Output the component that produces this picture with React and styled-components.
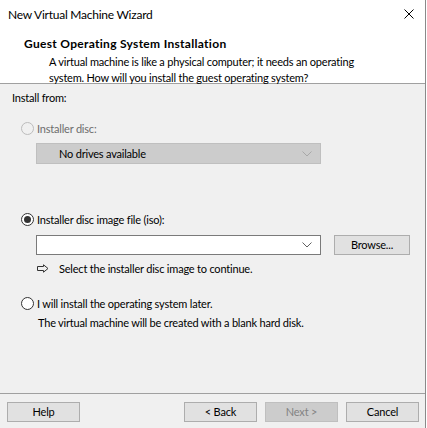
import React from "react";
import styled, { createGlobalStyle } from "styled-components";

const GlobalStyle = createGlobalStyle`
  html, body {
    margin: 0;
    padding: 0;
    background: #ffffff;
  }
  body {
    font-family: "Segoe UI", Lato, "Liberation Sans", sans-serif;
    font-size: 11px;
    letter-spacing: -0.2px;
    color: #000000;
  }
`;

function App() {
  return (
    <>
      <GlobalStyle />
      <Window>
        <TitleBar>
          <Title>New Virtual Machine Wizard</Title>
          <CloseButton>
            <svg width="10" height="10" viewBox="0 0 10 10">
              <path d="M0.5 0.5 L9.5 9.5 M9.5 0.5 L0.5 9.5" stroke="#000" strokeWidth="1" />
            </svg>
          </CloseButton>
        </TitleBar>
        <Header>
          <HeaderTitle>Guest Operating System Installation</HeaderTitle>
          <HeaderText>
            A virtual machine is like a physical computer; it needs an operating
            <br />
            system. How will you install the guest operating system?
          </HeaderText>
        </Header>
        <Body>
          <SectionLabel>Install from:</SectionLabel>

          <RadioRow top={14} disabled>
            <Radio disabled />
            Installer disc:
          </RadioRow>
          <Combo top={7} height={21} disabled>
            <ComboText>No drives available</ComboText>
            <Chevron color="#a8a8a8" />
          </Combo>

          <RadioRow top={47}>
            <Radio checked />
            Installer disc image file (iso):
          </RadioRow>
          <ComboLine>
            <Combo top={0} height={20}>
              <ComboText />
              <Chevron color="#606060" />
            </Combo>
            <Button width={76}>Browse...</Button>
          </ComboLine>
          <HintRow>
            <svg width="12" height="9" viewBox="0 0 12 9">
              <path
                d="M0.5 2.5 H6.5 V0.8 L11 4.5 L6.5 8.2 V6.5 H0.5 Z"
                fill="none"
                stroke="#333"
                strokeWidth="1"
              />
            </svg>
            <span>Select the installer disc image to continue.</span>
          </HintRow>

          <RadioRow top={19}>
            <Radio />
            I will install the operating system later.
          </RadioRow>
          <Note>The virtual machine will be created with a blank hard disk.</Note>
        </Body>
        <Footer>
          <Button width={73}>Help</Button>
          <Spacer />
          <Button width={73}>&lt; Back</Button>
          <Button width={73} disabled>
            Next &gt;
          </Button>
          <Button width={73}>Cancel</Button>
        </Footer>
      </Window>
    </>
  );
}

function Chevron({ color }) {
  return (
    <svg width="10" height="6" viewBox="0 0 10 6">
      <path d="M0.5 0.5 L5 5 L9.5 0.5" fill="none" stroke={color} strokeWidth="1" />
    </svg>
  );
}

export default App;

const Window = styled.div`
  width: 425px;
  height: 428px;
  border-right: 1px solid #8a8a8a;
  display: flex;
  flex-direction: column;
  background: #f0f0f0;
  overflow: hidden;
`;

const TitleBar = styled.div`
  height: 30px;
  background: #ffffff;
  display: flex;
  align-items: center;
  padding-left: 8px;
  box-sizing: border-box;
`;

const Title = styled.div`
  flex: 1;
  font-size: 12px;
  letter-spacing: -0.25px;
  line-height: 16px;
  margin-top: -1px;
`;

const CloseButton = styled.div`
  width: 10px;
  height: 10px;
  margin-right: 11px;
  margin-top: -2px;
  display: flex;
`;

const Header = styled.div`
  height: 53px;
  flex-shrink: 0;
  background: #ffffff;
  border-bottom: 1px solid #a0a0a0;
  padding-left: 24px;
`;

const HeaderTitle = styled.div`
  font-weight: bold;
  font-size: 12px;
  letter-spacing: 0.3px;
  line-height: 14px;
  margin-top: 7px;
`;

const HeaderText = styled.div`
  line-height: 16px;
  margin-top: 3px;
  padding-left: 25px;
`;

const Body = styled.div`
  flex: 1;
  display: flex;
  flex-direction: column;
  padding-left: 12px;
  border-bottom: 1px solid #a0a0a0;
`;

const SectionLabel = styled.div`
  line-height: 16px;
  margin-top: 6px;
`;

const RadioRow = styled.div`
  display: flex;
  align-items: center;
  height: 16px;
  margin-top: ${(p) => p.top}px;
  margin-left: 9px;
  gap: 3px;
  color: ${(p) => (p.disabled ? "#6d6d6d" : "#000000")};
`;

const Radio = styled.span`
  width: 13px;
  height: 13px;
  box-sizing: border-box;
  border-radius: 50%;
  border: 1px solid ${(p) => (p.disabled ? "#bcbcbc" : "#333333")};
  background: ${(p) => (p.disabled ? "#f0f0f0" : "#ffffff")};
  display: flex;
  align-items: center;
  justify-content: center;
  flex-shrink: 0;

  &::after {
    content: "";
    display: ${(p) => (p.checked ? "block" : "none")};
    width: 7px;
    height: 7px;
    border-radius: 50%;
    background: #333333;
  }
`;

const Combo = styled.div`
  width: 285px;
  height: ${(p) => p.height}px;
  box-sizing: border-box;
  margin-top: ${(p) => p.top}px;
  margin-left: ${(p) => (p.top ? 24 : 0)}px;
  display: flex;
  align-items: center;
  padding: 0 8px 0 22px;
  background: ${(p) => (p.disabled ? "#cccccc" : "#ffffff")};
  border: 1px solid ${(p) => (p.disabled ? "#bfbfbf" : "#7a7a7a")};
`;

const ComboText = styled.span`
  flex: 1;
  line-height: 16px;
  color: #000000;
`;

const ComboLine = styled.div`
  display: flex;
  align-items: center;
  margin-top: 8px;
  margin-left: 24px;
  gap: 13px;
`;

const Button = styled.div`
  width: ${(p) => p.width}px;
  height: 20px;
  box-sizing: border-box;
  display: flex;
  align-items: center;
  justify-content: center;
  background: ${(p) => (p.disabled ? "#cccccc" : "#e1e1e1")};
  border: 1px solid ${(p) => (p.disabled ? "#bfbfbf" : "#adadad")};
  color: ${(p) => (p.disabled ? "#838383" : "#000000")};
  line-height: 16px;
`;

const HintRow = styled.div`
  display: flex;
  align-items: center;
  gap: 10px;
  height: 16px;
  margin-top: 5px;
  margin-left: 25px;
`;

const Note = styled.div`
  line-height: 16px;
  margin-top: 4px;
  margin-left: 26px;
`;

const Footer = styled.div`
  height: 34px;
  flex-shrink: 0;
  display: flex;
  gap: 8px;
  padding: 8px 6px 0 7px;
  box-sizing: border-box;
`;

const Spacer = styled.div`
  flex: 1;
`;
